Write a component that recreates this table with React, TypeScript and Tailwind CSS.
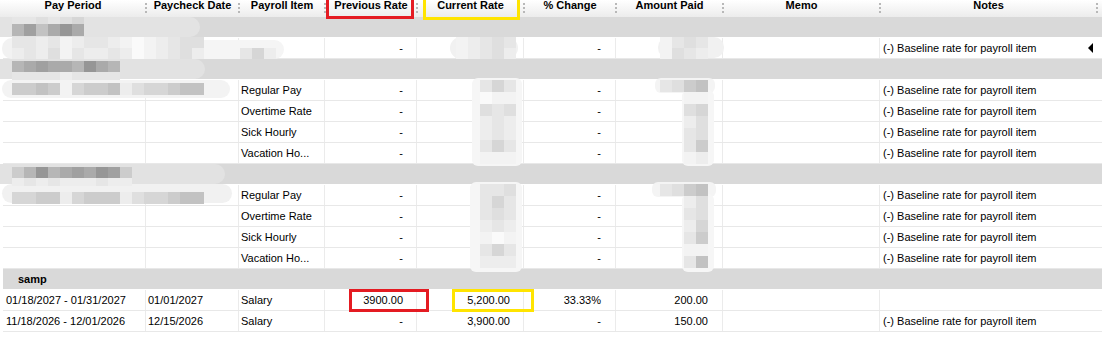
import React from "react";

// shades used by the redaction mosaics
const SH: Record<string, string> = {
  ".": "bg-transparent",
  "0": "bg-[#fafafa]",
  "1": "bg-[#f3f3f3]",
  "2": "bg-[#ededed]",
  "3": "bg-[#e6e6e6]",
  "4": "bg-[#dfdfdf]",
  "5": "bg-[#d6d6d6]",
  "6": "bg-[#cccccc]",
  "7": "bg-[#c2c2c2]",
  "8": "bg-[#b6b6b6]",
  "9": "bg-[#aaaaaa]",
  a: "bg-[#a0a0a0]",
  b: "bg-[#969696]",
};

const headers: [string, string][] = [
  ["Pay Period", "w-[146px]"],
  ["Paycheck Date", "w-[93px]"],
  ["Payroll Item", "w-[86px]"],
  ["Previous Rate", "w-[92px]"],
  ["Current Rate", "w-[107px]"],
  ["% Change", "w-[92px]"],
  ["Amount Paid", "w-[107px]"],
  ["Memo", "w-[157px]"],
  ["Notes", "w-[217px]"],
];

type DataRow = {
  period?: string;
  date?: string;
  item?: string;
  prev?: string;
  cur?: string;
  pct?: string;
  amt?: string;
  notes?: string;
  arrow?: boolean;
};
type Row = { group: string } | DataRow;

const NOTE = "(-) Baseline rate for payroll item";
const items = ["Regular Pay", "Overtime Rate", "Sick Hourly", "Vacation Ho..."];

const rows: Row[] = [
  { group: "" },
  { prev: "-", pct: "-", notes: NOTE, arrow: true },
  { group: "" },
  ...items.map((item) => ({ item, prev: "-", pct: "-", notes: NOTE })),
  { group: "" },
  ...items.map((item) => ({ item, prev: "-", pct: "-", notes: NOTE })),
  { group: "samp" },
  {
    period: "01/18/2027 - 01/31/2027",
    date: "01/01/2027",
    item: "Salary",
    prev: "3900.00",
    cur: "5,200.00",
    pct: "33.33%",
    amt: "200.00",
  },
  {
    period: "11/18/2026 - 12/01/2026",
    date: "12/15/2026",
    item: "Salary",
    prev: "-",
    cur: "3,900.00",
    pct: "-",
    amt: "150.00",
    notes: NOTE,
  },
];

const smudges = [
  "left-0 top-[17px] h-[20px] w-[200px] rounded-r-[10px] bg-[#e3e3e3]",
  "left-[2px] top-[38px] h-[21px] w-[202px] rounded-[10px] bg-[#f2f2f2]",
  "left-[200px] top-[40px] h-[19px] w-[84px] rounded-r-[10px] bg-[#f5f5f5]",
  "left-0 top-[59px] h-[20px] w-[205px] rounded-r-[10px] bg-[#e2e2e2]",
  "left-[2px] top-[80px] h-[18px] w-[228px] rounded-[9px] bg-[#f3f3f3]",
  "left-0 top-[164px] h-[20px] w-[225px] rounded-r-[10px] bg-[#e2e2e2]",
  "left-[2px] top-[184px] h-[19px] w-[230px] rounded-[10px] bg-[#f1f1f1]",
  "left-[450px] top-[37px] h-[22px] w-[68px] rounded-[11px] bg-[#f1f1f1]",
  "left-[658px] top-[37px] h-[21px] w-[66px] rounded-[10px] bg-[#f1f1f1]",
  "left-[472px] top-[78px] h-[88px] w-[50px] rounded-[6px] bg-[#f6f6f6]",
  "left-[470px] top-[182px] h-[90px] w-[52px] rounded-[6px] bg-[#f6f6f6]",
  "left-[655px] top-[78px] h-[15px] w-[60px] rounded-[6px] bg-[#f4f4f4]",
  "left-[682px] top-[90px] h-[76px] w-[32px] rounded-[6px] bg-[#f6f6f6]",
  "left-[652px] top-[182px] h-[15px] w-[64px] rounded-[6px] bg-[#f4f4f4]",
  "left-[682px] top-[194px] h-[78px] w-[32px] rounded-[6px] bg-[#f6f6f6]",
];

const mosaics: { at: string; rows: [string, string][] }[] = [
  { at: "left-[12px] top-[17px]", rows: [["h-[7px]", "334345"], ["h-[12px]", "8a79b9"]] },
  {
    at: "left-[12px] top-[37px]",
    rows: [
      ["h-[11px]", "3323123321012344"],
      ["h-[11px]", "2324132232012342"],
    ],
  },
  { at: "left-[240px] top-[48px]", rows: [["h-[11px]", "352"]] },
  { at: "left-[12px] top-[61px]", rows: [["h-[11px]", "89a998b98"], ["h-[8px]", "333323333"]] },
  { at: "left-[12px] top-[83px]", rows: [["h-[12px]", "6676156672455677"]] },
  { at: "left-[12px] top-[167px]", rows: [["h-[11px]", "68b89a9ba6"], ["h-[8px]", "2323222322"]] },
  { at: "left-[12px] top-[192px]", rows: [["h-[12px]", "5566256662455677"]] },
  { at: "left-[456px] top-[37px]", rows: [["h-[11px]", "12343"], ["h-[11px]", "12342"]] },
  {
    at: "left-[480px] top-[80px]",
    rows: ["353", "011", "434", "232", "232", "353", "111"].map((p) => ["h-[12px]", p] as [string, string]),
  },
  {
    at: "left-[480px] top-[184px]",
    rows: ["334", "353", "343", "232", "101", "353", "222"].map((p) => ["h-[12px]", p] as [string, string]),
  },
  { at: "left-[660px] top-[37px]", rows: [["h-[11px]", "1343"], ["h-[11px]", "1432"]] },
  {
    at: "left-[660px] top-[80px]",
    rows: ["3467", "..11", "..45", "..24", "..34", "..36", "..12"].map((p) => ["h-[12px]", p] as [string, string]),
  },
  {
    at: "left-[660px] top-[184px]",
    rows: ["3467", "..24", "..34", "..25", "..36", "..11", "..37"].map((p) => ["h-[12px]", p] as [string, string]),
  },
];

function Mosaic({ at, rows }: { at: string; rows: [string, string][] }) {
  return (
    <div className={`absolute flex flex-col ${at}`}>
      {rows.map(([h, p], i) => (
        <div key={i} className="flex">
          {[...p].map((ch, j) => (
            <span key={j} className={`w-[12px] ${h} ${SH[ch]}`} />
          ))}
        </div>
      ))}
    </div>
  );
}

const cell = "flex h-full items-center overflow-hidden whitespace-nowrap border-r border-[#ebebeb]";

export default function App() {
  return (
    <div className="relative h-[350px] w-[1102px] overflow-hidden bg-white font-['Liberation_Sans',Arial,sans-serif] text-[11px] text-black">
      {/* column headers */}
      <div className="flex h-[17px] bg-linear-to-b from-white to-[#ececec]">
        {headers.map(([label, w]) => (
          <div key={label} className={`relative flex justify-center font-bold leading-[11px] ${w}`}>
            {label}
            <span className="absolute right-[-1px] top-[3px] h-[10px] w-0 border-r-2 border-dotted border-[#b8b8b8]" />
          </div>
        ))}
      </div>

      {/* rows */}
      <div className="ml-[3px]">
        {rows.map((r, i) =>
          "group" in r ? (
            <div
              key={i}
              className="flex h-[21px] items-center border-b border-white bg-[#d9d9d9] pl-[15px] font-bold"
            >
              {r.group}
            </div>
          ) : (
            <div key={i} className="flex h-[21px] border-b border-[#e8e8e8]">
              <div className={`${cell} w-[143px] pl-[3px]`}>{r.period}</div>
              <div className={`${cell} w-[93px] pl-[2px]`}>{r.date}</div>
              <div className={`${cell} w-[86px] pl-[2px]`}>{r.item}</div>
              <div className={`${cell} w-[92px] justify-end pr-[13px]`}>{r.prev}</div>
              <div className={`${cell} w-[107px] justify-end pr-[13px]`}>{r.cur}</div>
              <div className={`${cell} w-[92px] justify-end pr-[14px]`}>{r.pct}</div>
              <div className={`${cell} w-[107px] justify-end pr-[14px]`}>{r.amt}</div>
              <div className={`${cell} w-[157px]`} />
              <div className="flex h-full w-[217px] items-center justify-between whitespace-nowrap pl-[3px] pr-[4px]">
                <span>{r.notes}</span>
                {r.arrow && (
                  <svg width="5" height="10" viewBox="0 0 5 10">
                    <polygon points="5,0 0,5 5,10" fill="#000" />
                  </svg>
                )}
              </div>
            </div>
          )
        )}
      </div>

      {/* redactions */}
      {smudges.map((s, i) => (
        <div key={i} className={`absolute ${s}`} />
      ))}
      {mosaics.map((m, i) => (
        <Mosaic key={i} at={m.at} rows={m.rows} />
      ))}

      {/* highlight boxes */}
      <div className="absolute left-[326px] top-[-4px] h-[23px] w-[88px] border-[3px] border-[#e41b22]" />
      <div className="absolute left-[423px] top-[-4px] h-[24px] w-[97px] border-[3px] border-[#ffe400]" />
      <div className="absolute left-[349px] top-[289px] h-[23px] w-[80px] border-[3px] border-[#e41b22]" />
      <div className="absolute left-[452px] top-[289px] h-[23px] w-[82px] border-[3px] border-[#ffe400]" />
    </div>
  );
}
